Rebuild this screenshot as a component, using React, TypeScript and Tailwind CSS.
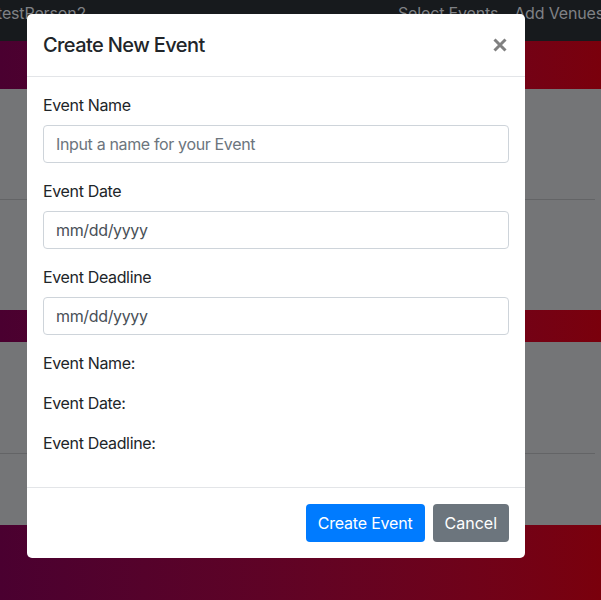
import React from "react";

const font = { fontFamily: "Inter, 'Noto Sans', 'Liberation Sans', sans-serif" };

export default function App() {
  return (
    <div className="relative w-[601px] h-[600px] overflow-hidden bg-[#747577] tracking-[-0.022em]" style={font}>
      {/* page behind backdrop */}
      <div className="flex flex-col w-full">
        <div className="h-[41px] bg-[#171a1d] flex items-start text-[16px] leading-6 text-[#7f8185] pt-[1px] whitespace-nowrap overflow-hidden tracking-[-0.01em]">
          <span className="w-[401px] shrink-0 ml-[-3px]">testPerson2</span>
          <span className="shrink-0">Select Events</span>
          <span className="shrink-0 ml-[16px]">Add Venues</span>
        </div>
        <div className="h-[48px] w-full bg-gradient-to-r from-[#4a0030] to-[#7a000c]" />
        <div className="h-[221px] bg-[#747577] flex flex-col">
          <div className="h-[110px]" />
          <div className="h-px bg-[#636466] w-[595px]" />
        </div>
        <div className="h-[32px] w-full bg-gradient-to-r from-[#4a0030] to-[#7a000c]" />
        <div className="h-[183px] bg-[#747577] flex flex-col">
          <div className="h-[111px]" />
          <div className="h-px bg-[#636466] w-[595px]" />
        </div>
        <div className="h-[75px] w-full bg-gradient-to-r from-[#4a0030] to-[#7a000c]" />
      </div>

      {/* modal */}
      <div className="absolute left-[27px] top-[14px] w-[498px] bg-white rounded-[5px] text-[#212529]">
        <div className="flex items-start justify-between px-4 pt-4 pb-4 border-b border-[#e3e5e8]">
          <h5 className="text-[20px] leading-[30px] font-medium tracking-[-0.03em]">Create New Event</h5>
          <button className="mt-[8px] mr-[2px] w-[14px] h-[14px] flex items-center justify-center">
            <svg width="14" height="14" viewBox="0 0 14 14">
              <path d="M1.5 1.5 L12.5 12.5 M12.5 1.5 L1.5 12.5" stroke="#808080" strokeWidth="3" strokeLinecap="butt" />
            </svg>
          </button>
        </div>
        <div className="p-4 text-[16px] leading-6">
          <div className="mb-4">
            <label className="block mb-2">Event Name</label>
            <input
              type="text"
              placeholder="Input a name for your Event"
              className="block w-full h-[38px] px-3 border border-[#ced4da] rounded-[4px] text-[16px] tracking-[-0.022em] placeholder:text-[#6c757d] outline-none"
            />
          </div>
          <div className="mb-4">
            <label className="block mb-2">Event Date</label>
            <div className="w-full h-[38px] px-3 border border-[#ced4da] rounded-[4px] flex items-center text-[#495057]">
              mm/dd/yyyy
            </div>
          </div>
          <div className="mb-4">
            <label className="block mb-2">Event Deadline</label>
            <div className="w-full h-[38px] px-3 border border-[#ced4da] rounded-[4px] flex items-center text-[#495057]">
              mm/dd/yyyy
            </div>
          </div>
          <p className="mb-4">Event Name:</p>
          <p className="mb-4">Event Date:</p>
          <p className="mb-4">Event Deadline:</p>
        </div>
        <div className="flex justify-end items-center gap-2 px-4 py-4 border-t border-[#e3e5e8]">
          <button className="h-[38px] px-3 rounded-[4px] bg-[#007bff] text-white text-[16px] tracking-[-0.012em]">Create Event</button>
          <button className="h-[38px] px-3 rounded-[4px] bg-[#6c757d] text-white text-[16px] tracking-normal">Cancel</button>
        </div>
      </div>
    </div>
  );
}
